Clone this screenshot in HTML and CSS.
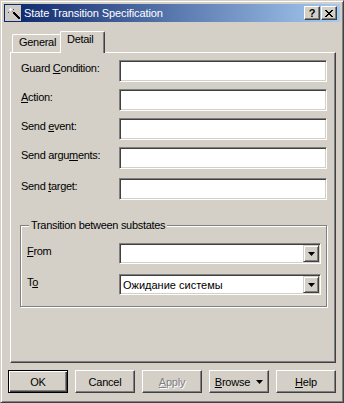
FILE: index.html
```html
<!DOCTYPE html>
<html lang="en">
<head>
  <meta charset="UTF-8">
  <title>State Transition Specification</title>
  <link rel="stylesheet" href="styles.css">
</head>
<body>
  <div class="window">
    <!-- title bar -->
    <div class="titlebar">
      <svg class="app-icon" width="16" height="16" viewBox="0 0 16 16" shape-rendering="crispEdges">
        <rect x="0" y="0" width="16" height="16" fill="#cfcbc3"/>
        <path d="M8 7h2v1h1v1h1v1h1v1h1v1h1v2h-2v-1h-1v-1h-1v-1h-1v-1h-1v-1h-1z" fill="#000"/>
        <rect x="5" y="3" width="1" height="3" fill="#ffffff"/>
        <rect x="4" y="4" width="3" height="1" fill="#ffffff"/>
        <rect x="8" y="4" width="1" height="1" fill="#2050c0"/>
        <rect x="3" y="7" width="1" height="1" fill="#2050c0"/>
        <rect x="7" y="6" width="1" height="1" fill="#808080"/>
      </svg>
      <span class="title">State Transition Specification</span>
      <div class="caption-buttons">
        <span class="cap-btn help">?</span>
        <span class="cap-btn close">
          <svg width="8" height="7" viewBox="0 0 8 7" shape-rendering="crispEdges">
            <path d="M0 0h2v1h-2zM6 0h2v1h-2zM1 1h2v1h-2zM5 1h2v1h-2zM2 2h4v1h-4zM3 3h2v1h-2zM2 4h4v1h-4zM1 5h2v1h-2zM5 5h2v1h-2zM0 6h2v1h-2zM6 6h2v1h-2z" fill="#000"/>
          </svg>
        </span>
      </div>
    </div>

    <div class="content">
      <!-- tabs -->
      <div class="tabs">
        <div class="tab">General</div>
        <div class="tab active">Detail</div>
      </div>

      <!-- tab page -->
      <div class="panel">
        <div class="row"><label>Guard <u>C</u>ondition:</label><input class="edit" type="text"></div>
        <div class="row"><label><u>A</u>ction:</label><input class="edit" type="text"></div>
        <div class="row"><label>Send <u>e</u>vent:</label><input class="edit" type="text"></div>
        <div class="row"><label>Send argu<u>m</u>ents:</label><input class="edit" type="text"></div>
        <div class="row last"><label>Send <u>t</u>arget:</label><input class="edit" type="text"></div>

        <div class="group">
          <div class="group-title">Transition between substates</div>
          <div class="group-row first">
            <label><u>F</u>rom</label>
            <div class="combo">
              <span class="combo-text"></span>
              <span class="drop"><svg width="7" height="4" viewBox="0 0 7 4"><path d="M0 0h7l-3.5 4z" fill="#000"/></svg></span>
            </div>
          </div>
          <div class="group-row">
            <label>T<u>o</u></label>
            <div class="combo">
              <span class="combo-text">Ожидание системы</span>
              <span class="drop"><svg width="7" height="4" viewBox="0 0 7 4"><path d="M0 0h7l-3.5 4z" fill="#000"/></svg></span>
            </div>
          </div>
        </div>
      </div>

      <!-- dialog buttons -->
      <div class="buttons">
        <button class="btn default"><span>OK</span></button>
        <button class="btn"><span>Cancel</span></button>
        <button class="btn disabled"><span><u>A</u>pply</span></button>
        <button class="btn browse"><span><u>B</u>rowse</span><svg width="7" height="4" viewBox="0 0 7 4"><path d="M0 0h7l-3.5 4z" fill="#000"/></svg></button>
        <button class="btn"><span><u>H</u>elp</span></button>
      </div>
    </div>
  </div>
</body>
</html>
```

FILE: styles.css
```css
body {
  margin: 0;
  background: #d4d0c8;
  font-family: "Liberation Sans", Arial, sans-serif;
  font-size: 11px;
  color: #000;
}

.window {
  width: 344px;
  height: 403px;
  box-sizing: border-box;
  padding: 1px;
  display: flex;
  flex-direction: column;
  background: #d4d0c8;
  border: 1px solid;
  border-color: #d4d0c8 #404040 #404040 #d4d0c8;
  box-shadow: inset 1px 1px 0 #fff, inset -1px -1px 0 #808080;
}

/* title bar */
.titlebar {
  height: 18px;
  margin: 2px 2px 0 2px;
  display: flex;
  align-items: center;
  background: linear-gradient(to right, #0a246a, #a6caf0);
  color: #fff;
}

.app-icon {
  margin-left: 1px;
  flex: none;
}

.title {
  margin-left: 3px;
  line-height: 18px;
  letter-spacing: -0.1px;
  white-space: nowrap;
}

.caption-buttons {
  margin-left: auto;
  margin-right: 3px;
  display: flex;
  gap: 1px;
}

.cap-btn {
  width: 16px;
  height: 14px;
  box-sizing: border-box;
  display: flex;
  align-items: center;
  justify-content: center;
  background: #d4d0c8;
  border: 1px solid;
  border-color: #fff #404040 #404040 #fff;
  box-shadow: inset -1px -1px 0 #808080;
  color: #000;
}

.cap-btn.help {
  font-weight: bold;
  font-size: 11px;
  line-height: 12px;
}

/* main area */
.content {
  flex: 1;
  display: flex;
  flex-direction: column;
  padding: 0 6px;
}

.tabs {
  margin-top: 9px;
  padding-left: 4px;
  display: flex;
  align-items: flex-end;
}

.tab {
  box-sizing: border-box;
  height: 18px;
  width: 49px;
  padding: 1px 0 0 6px;
  line-height: 13px;
  letter-spacing: -0.3px;
  border-top: 1px solid #fff;
  border-left: 1px solid #fff;
  border-top-left-radius: 2px;
}

.tab.active {
  position: relative;
  z-index: 1;
  height: 22px;
  width: 45px;
  margin-left: -1px;
  margin-bottom: -1px;
  background: #d4d0c8;
  border-right: 1px solid #404040;
  border-top-right-radius: 2px;
  box-shadow: inset -1px 0 0 #808080;
}

.panel {
  flex: 1;
  margin-left: 2px;
  padding: 7px 8px 0 9px;
  display: flex;
  flex-direction: column;
  gap: 7px;
  border: 1px solid;
  border-color: #fff #404040 #404040 #fff;
  box-shadow: inset -1px -1px 0 #808080;
}

.row {
  display: flex;
  align-items: flex-start;
  padding-left: 1px;
}

.row.last {
  margin-top: 2px;
}

label {
  flex: none;
  width: 98px;
  padding-top: 2px;
  line-height: 13px;
  letter-spacing: -0.3px;
  white-space: nowrap;
}

u {
  text-underline-offset: 1px;
}

.edit {
  flex: 1;
  height: 22px;
  box-sizing: border-box;
  margin: 0;
  padding: 0 3px;
  background: #fff;
  border: 1px solid;
  border-color: #808080 #fff #fff #808080;
  box-shadow: inset 1px 1px 0 #404040, inset -1px -1px 0 #d4d0c8;
  outline: none;
  font: inherit;
}

/* group box */
.group {
  margin-top: 18px;
  padding: 0 5px 11px 6px;
  border: 1px solid #808080;
  box-shadow: inset 1px 1px 0 #fff, 1px 1px 0 #fff;
}

.group-title {
  width: fit-content;
  margin: -7px 0 0 2px;
  padding: 0 2px;
  line-height: 13px;
  letter-spacing: -0.3px;
  background: #d4d0c8;
}

.group-row {
  display: flex;
  align-items: flex-start;
  margin-top: 10px;
}

.group-row.first {
  margin-top: 11px;
}

.group-row label {
  width: 92px;
}

.combo {
  flex: 1;
  height: 21px;
  box-sizing: border-box;
  display: flex;
  align-items: center;
  background: #fff;
  border: 1px solid;
  border-color: #808080 #fff #fff #808080;
  box-shadow: inset 1px 1px 0 #404040, inset -1px -1px 0 #d4d0c8;
  padding: 1px;
}

.combo-text {
  flex: 1;
  padding-left: 2px;
  white-space: nowrap;
}

.drop {
  width: 16px;
  height: 17px;
  box-sizing: border-box;
  display: flex;
  align-items: center;
  justify-content: center;
  background: #d4d0c8;
  border: 1px solid;
  border-color: #d4d0c8 #404040 #404040 #d4d0c8;
  box-shadow: inset 1px 1px 0 #fff, inset -1px -1px 0 #808080;
}

/* dialog buttons */
.buttons {
  display: flex;
  gap: 7px;
  margin: 7px 0 8px 0;
}

.btn {
  width: 60px;
  height: 23px;
  box-sizing: border-box;
  margin: 0;
  padding: 0;
  display: flex;
  align-items: center;
  justify-content: center;
  gap: 6px;
  background: #d4d0c8;
  border: 1px solid;
  border-color: #fff #404040 #404040 #fff;
  box-shadow: inset -1px -1px 0 #808080;
  font: inherit;
  letter-spacing: -0.2px;
  color: #000;
}

.btn.default {
  border-color: #000;
  box-shadow: inset 1px 1px 0 #fff, inset -1px -1px 0 #404040, inset -2px -2px 0 #808080;
}

.btn.disabled {
  color: #808080;
  text-shadow: 1px 1px 0 #fff;
}
```
